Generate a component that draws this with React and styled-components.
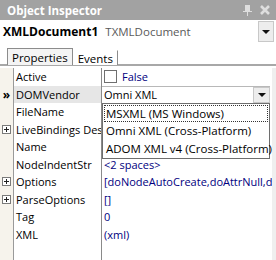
import React from 'react';
import styled, { createGlobalStyle } from 'styled-components';

const GlobalStyle = createGlobalStyle`
  html, body {
    margin: 0;
    padding: 0;
    background: #ffffff;
  }
`;

const ROW_H = 17.5;

// Name value sits under the open drop-down list, so it is left blank here
const properties = [
  { name: 'Active', value: 'False', kind: 'check' },
  { name: 'DOMVendor', value: 'Omni XML', kind: 'combo', current: true },
  { name: 'FileName', value: '' },
  { name: 'LiveBindings Designer', value: '', expand: true },
  { name: 'Name', value: '' },
  { name: 'NodeIndentStr', value: '<2 spaces>' },
  { name: 'Options', value: '[doNodeAutoCreate,doAttrNull,doAutoPrefix]', expand: true },
  { name: 'ParseOptions', value: '[]', expand: true },
  { name: 'Tag', value: '0' },
  { name: 'XML', value: '(xml)' },
];

const vendors = ['MSXML (MS Windows)', 'Omni XML (Cross-Platform)', 'ADOM XML v4 (Cross-Platform)'];

const Panel = styled.div`
  width: 276px;
  height: 260px;
  display: flex;
  flex-direction: column;
  overflow: hidden;
  font-family: 'Open Sans', 'Noto Sans', sans-serif;
  font-size: 11px;
  color: #000;
  background: #fff;
`;

const TitleBar = styled.div`
  height: 20px;
  flex: none;
  display: flex;
  align-items: center;
  padding: 0 6px 0 7px;
  background: #a2a2a2;
  color: #fff;
  font-weight: 700;
  font-size: 11.5px;
`;

const TitleText = styled.span`
  flex: 1;
`;

const TitleIcons = styled.div`
  display: flex;
  align-items: center;
  gap: 8px;
  color: #dedede;
`;

const ComponentRow = styled.div`
  height: 23px;
  flex: none;
  display: flex;
  align-items: center;
  padding-left: 3px;
  background: #fff;
`;

const ComponentName = styled.span`
  font-weight: 700;
  font-size: 12px;
  margin-right: 7px;
`;

const ComponentType = styled.span`
  flex: 1;
  color: #5a5a5a;
  font-size: 11.5px;
`;

const DropButton = styled.div`
  width: ${p => p.$w || 16}px;
  align-self: stretch;
  margin: ${p => p.$m || '1px 2px 1px 0'};
  display: flex;
  align-items: center;
  justify-content: center;
  background: #ededed;
  border: 1px solid #c8c8c8;
  box-sizing: border-box;
`;

const Arrow = styled.div`
  width: 0;
  height: 0;
  border-left: 4px solid transparent;
  border-right: 4px solid transparent;
  border-top: 4px solid #111;
`;

const TabStrip = styled.div`
  height: 21px;
  flex: none;
  display: flex;
  align-items: flex-end;
  padding: 0 0 0 7px;
  border-bottom: 2px solid #a8a8a8;
  background: #fff;
`;

const Tab = styled.div`
  height: ${p => (p.$active ? 17 : 15)}px;
  padding: 0 4px;
  display: flex;
  align-items: center;
  box-sizing: border-box;
  font-size: 11.5px;
  border: 1px solid ${p => (p.$active ? '#8c8c8c' : 'transparent')};
  border-bottom: none;
  border-right: 1px solid #8c8c8c;
  margin-bottom: -1px;
  background: ${p => (p.$active ? '#f4f4f4' : '#fff')};
`;

const GridArea = styled.div`
  flex: 1;
  position: relative;
  display: flex;
  padding-top: 2px;
  background: #fff;
`;

const Rows = styled.div`
  flex: 1;
  display: flex;
  flex-direction: column;
  background: linear-gradient(to right, #f6f3ec 0 13px, #9a9a9a 13px 14px, transparent 14px 101px, #8a8a8a 101px 102px, transparent 102px);
`;

const ScrollStrip = styled.div`
  width: 4px;
  flex: none;
  background: #efefef;
`;

const Row = styled.div`
  height: ${ROW_H}px;
  display: grid;
  grid-template-columns: 14px 87px 1px 1fr;
  align-items: center;
  white-space: nowrap;
`;

const Gutter = styled.div`
  display: flex;
  align-items: center;
  justify-content: center;
  width: 13px;
  height: 100%;
  font-size: 12px;
  font-weight: 700;
`;

const ExpandBox = styled.div`
  width: 7px;
  height: 7px;
  border: 1px solid #7a7a7a;
  position: relative;
  background: #fff;
  &::before {
    content: '';
    position: absolute;
    left: 1px;
    top: 3px;
    width: 5px;
    height: 1px;
    background: #222;
  }
  &::after {
    content: '';
    position: absolute;
    left: 3px;
    top: 1px;
    width: 1px;
    height: 5px;
    background: #222;
  }
`;

const NameCell = styled.div`
  height: 100%;
  display: flex;
  align-items: center;
  padding-left: 2px;
  overflow: hidden;
  background: ${p => (p.$current ? '#e6e6e6' : 'transparent')};
`;

const ValueCell = styled.div`
  grid-column: 4;
  height: 100%;
  display: flex;
  align-items: center;
  padding-left: 2px;
  overflow: hidden;
  color: #000080;
`;

const ComboEditor = styled.div`
  grid-column: 4;
  height: 100%;
  display: flex;
  align-items: center;
  padding-left: 2px;
  box-sizing: border-box;
  border-top: 1px solid #b8b8b8;
  color: #000;
  margin-right: 2px;
`;

const ComboText = styled.span`
  flex: 1;
`;

const CheckBox = styled.div`
  width: 11px;
  height: 11px;
  border: 1px solid #6f6f6f;
  background: #fff;
  margin-right: 5px;
  flex: none;
`;

const DropList = styled.div`
  position: absolute;
  left: 102px;
  top: ${2 + ROW_H * 2}px;
  width: 168px;
  border: 1px solid #6e6e6e;
  background: #fff;
  box-sizing: border-box;
  padding: 1px;
`;

const ListItem = styled.div`
  height: ${p => (p.$first ? 17 : 17.5)}px;
  display: flex;
  align-items: center;
  padding-left: 1px;
  box-sizing: border-box;
  white-space: nowrap;
  font-size: 11.5px;
  border: 1px dotted ${p => (p.$focused ? '#333' : 'transparent')};
`;

function PinIcon() {
  return (
    <svg width="9" height="11" viewBox="0 0 9 11">
      <rect x="2" y="0" width="5" height="6" fill="currentColor" />
      <rect x="0" y="6" width="9" height="1" fill="currentColor" />
      <rect x="4" y="7" width="1" height="4" fill="currentColor" />
    </svg>
  );
}

function CloseIcon() {
  return (
    <svg width="10" height="10" viewBox="0 0 10 10">
      <path d="M1 1 L9 9 M9 1 L1 9" stroke="currentColor" strokeWidth="2.6" />
    </svg>
  );
}

function PropertyRow({ prop }) {
  let value;
  if (prop.kind === 'check') {
    value = (
      <ValueCell>
        <CheckBox />
        {prop.value}
      </ValueCell>
    );
  } else if (prop.kind === 'combo') {
    value = (
      <ComboEditor>
        <ComboText>{prop.value}</ComboText>
        <DropButton $w={17} $m="0">
          <Arrow />
        </DropButton>
      </ComboEditor>
    );
  } else {
    value = <ValueCell>{prop.value}</ValueCell>;
  }

  return (
    <Row>
      <Gutter>
        {prop.current ? '»' : prop.expand ? <ExpandBox /> : null}
      </Gutter>
      <NameCell $current={prop.current}>{prop.name}</NameCell>
      {value}
    </Row>
  );
}

export default function App() {
  return (
    <>
      <GlobalStyle />
      <Panel>
        <TitleBar>
          <TitleText>Object Inspector</TitleText>
          <TitleIcons>
            <PinIcon />
            <CloseIcon />
          </TitleIcons>
        </TitleBar>
        <ComponentRow>
          <ComponentName>XMLDocument1</ComponentName>
          <ComponentType>TXMLDocument</ComponentType>
          <DropButton>
            <Arrow />
          </DropButton>
        </ComponentRow>
        <TabStrip>
          <Tab $active>Properties</Tab>
          <Tab>Events</Tab>
        </TabStrip>
        <GridArea>
          <Rows>
            {properties.map(p => (
              <PropertyRow key={p.name} prop={p} />
            ))}
          </Rows>
          <ScrollStrip />
          <DropList>
            {vendors.map((v, i) => (
              <ListItem key={v} $first={i === 0} $focused={i === 0}>
                {v}
              </ListItem>
            ))}
          </DropList>
        </GridArea>
      </Panel>
    </>
  );
}
